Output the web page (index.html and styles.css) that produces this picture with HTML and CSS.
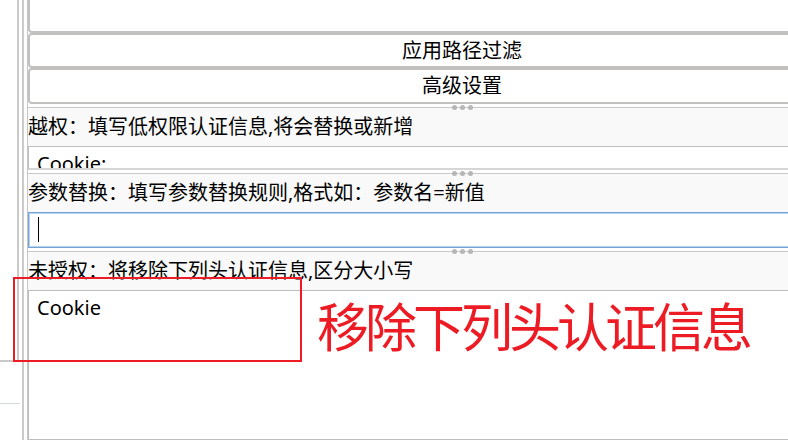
FILE: index.html
```html
<!DOCTYPE html>
<html lang="zh-CN">
<head>
<meta charset="utf-8">
<title>越权设置</title>
<link rel="stylesheet" href="styles.css">
</head>
<body>
<div class="app">
  <div class="side">
    <div class="side-top"></div>
    <div class="side-rule"></div>
  </div>
  <div class="rail"></div>
  <div class="main">
    <div class="btn btn-top"></div>
    <div class="btn">应用路径过滤</div>
    <div class="btn btn-2">高级设置</div>
    <div class="split"><span class="grip"><i></i><i></i><i></i></span></div>
    <section class="sec">
      <div class="label">越权：填写低权限认证信息,将会替换或新增</div>
      <div class="field field-short">Cookie:</div>
    </section>
    <div class="split"><span class="grip"><i></i><i></i><i></i></span></div>
    <section class="sec">
      <div class="label">参数替换：填写参数替换规则,格式如：参数名=新值</div>
      <div class="field field-focus"><span class="caret"></span></div>
    </section>
    <div class="split"><span class="grip"><i></i><i></i><i></i></span></div>
    <section class="sec sec-last">
      <div class="label">未授权：将移除下列头认证信息,区分大小写</div>
      <div class="field field-area">Cookie</div>
    </section>
  </div>
  <div class="note-box"></div>
  <div class="note-text">移除下列头认证信息</div>
</div>
</body>
</html>
```

FILE: styles.css
```css
html, body {
  margin: 0;
  padding: 0;
  background: #ffffff;
  overflow: hidden;
}

.app {
  position: relative;
  display: flex;
  width: 788px;
  height: 440px;
  overflow: hidden;
  font-family: "Noto Sans", "Noto Sans CJK SC", sans-serif;
  font-size: 20px;
  color: #000;
}

.side {
  width: 19px;
  flex: none;
  display: flex;
  flex-direction: column;
}

.side-top {
  height: 362px;
  box-sizing: border-box;
  border-right: 2px solid #c9c9c9;
  border-bottom: 2px solid #c9c9c9;
}

.side-rule {
  margin-top: 41px;
  width: 20px;
  height: 1px;
  background: #d3d8d8;
}

.rail {
  flex: none;
  width: 2px;
  margin-left: 3px;
  background: #cbcbcb;
}

.main {
  flex: none;
  margin-left: 3px;
  width: 868px;
  border-left: 1px solid #c6c6c6;
  display: flex;
  flex-direction: column;
  background: #fff;
}

.btn {
  box-sizing: border-box;
  height: 35px;
  border: 2px solid #c3c0c0;
  border-radius: 4px;
  background: #fff;
  display: flex;
  align-items: center;
  justify-content: center;
  line-height: 1;
  flex: none;
}

.btn-top {
  height: 33px;
  border-top: none;
  border-radius: 0 0 4px 4px;
}

.btn-2 {
  height: 36px;
}

.split {
  position: relative;
  height: 4px;
  box-sizing: border-box;
  border-bottom: 1px solid #c8c8c8;
  flex: none;
}

.grip {
  position: absolute;
  left: 424px;
  bottom: -3px;
  display: flex;
  gap: 3px;
}

.grip i {
  display: block;
  width: 5px;
  height: 5px;
  border-radius: 50%;
  background: #b6b6b6;
}

.sec {
  background: #f9f9f9;
  display: flex;
  flex-direction: column;
  flex: none;
}

.sec-last {
  flex: 1;
}

.label {
  height: 38px;
  line-height: 38px;
  padding-left: 0;
  white-space: nowrap;
}

.field {
  box-sizing: border-box;
  background: #fff;
  padding: 5px 0 0 8px;
  line-height: 24px;
  overflow: hidden;
  border: 1px solid #c2bcbf;
}

.field-short {
  height: 24px;
  border-bottom: 2px solid #d6d6d6;
}

.field-focus {
  height: 36px;
  border: 1px solid #74a3d8;
  box-shadow: inset 0 0 0 1px #b9d1ee;
  padding: 4px 0 0 9px;
}

.caret {
  display: block;
  width: 1px;
  height: 25px;
  background: #000;
}

.field-area {
  flex: 1;
  border-color: #bdbdbd;
  padding-top: 5px;
}

.note-box {
  position: absolute;
  left: 13px;
  top: 277px;
  width: 289px;
  height: 85px;
  box-sizing: border-box;
  border: 2px solid #ed1c24;
}

.note-text {
  position: absolute;
  left: 317px;
  top: 299px;
  font-family: "Noto Sans CJK SC", sans-serif;
  font-size: 52px;
  line-height: 52px;
  letter-spacing: -4px;
  color: #ed1c24;
  white-space: nowrap;
}
```
